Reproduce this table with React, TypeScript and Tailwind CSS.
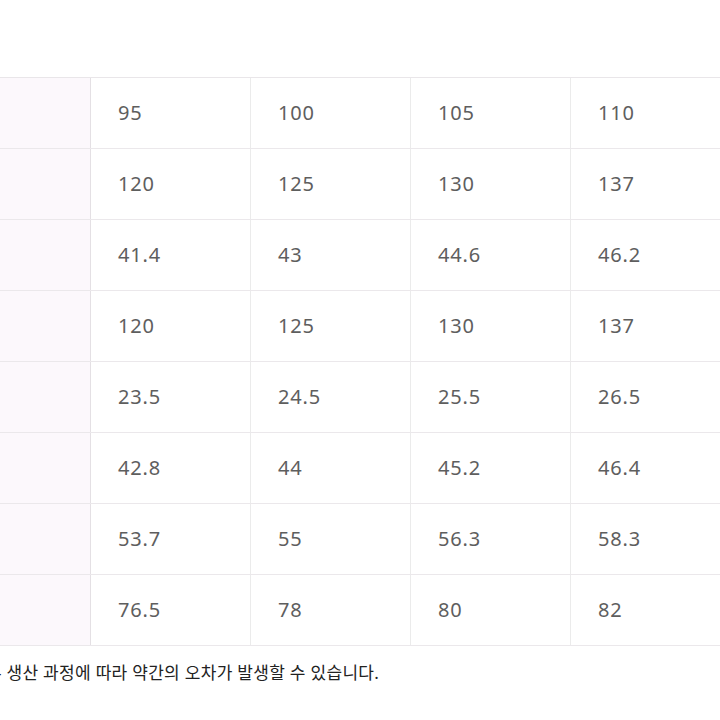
import React from "react";

const rows: string[][] = [
  ["95", "100", "105", "110"],
  ["120", "125", "130", "137"],
  ["41.4", "43", "44.6", "46.2"],
  ["120", "125", "130", "137"],
  ["23.5", "24.5", "25.5", "26.5"],
  ["42.8", "44", "45.2", "46.4"],
  ["53.7", "55", "56.3", "58.3"],
  ["76.5", "78", "80", "82"],
];

const App = () => {
  return (
    <div
      className="w-[720px] h-[720px] overflow-hidden bg-white"
      style={{ fontFamily: '"Noto Sans", "Noto Sans CJK KR", sans-serif' }}
    >
      <div className="h-[77px]" />
      <div className="w-[760px] border-t border-[#e9e6e9]">
        {rows.map((row, i) => (
          <div key={i} className="flex h-[71px] border-b border-[#ebe8eb]">
            <div className="w-[91px] shrink-0 bg-[#fcf8fc] border-r border-[#e4e0e4]" />
            {row.map((v, j) => (
              <div
                key={j}
                className="w-[160px] shrink-0 flex items-center pl-[27px] border-r border-[#ebebeb] text-[20px] text-[#5e5e5e] tracking-[0.8px]"
              >
                {v}
              </div>
            ))}
          </div>
        ))}
      </div>
      <div className="mt-[14px] -ml-[4px] text-[17px] tracking-[0.3px] text-[#222222] whitespace-nowrap">
        - 생산 과정에 따라 약간의 오차가 발생할 수 있습니다.
      </div>
    </div>
  );
};

export default App;
